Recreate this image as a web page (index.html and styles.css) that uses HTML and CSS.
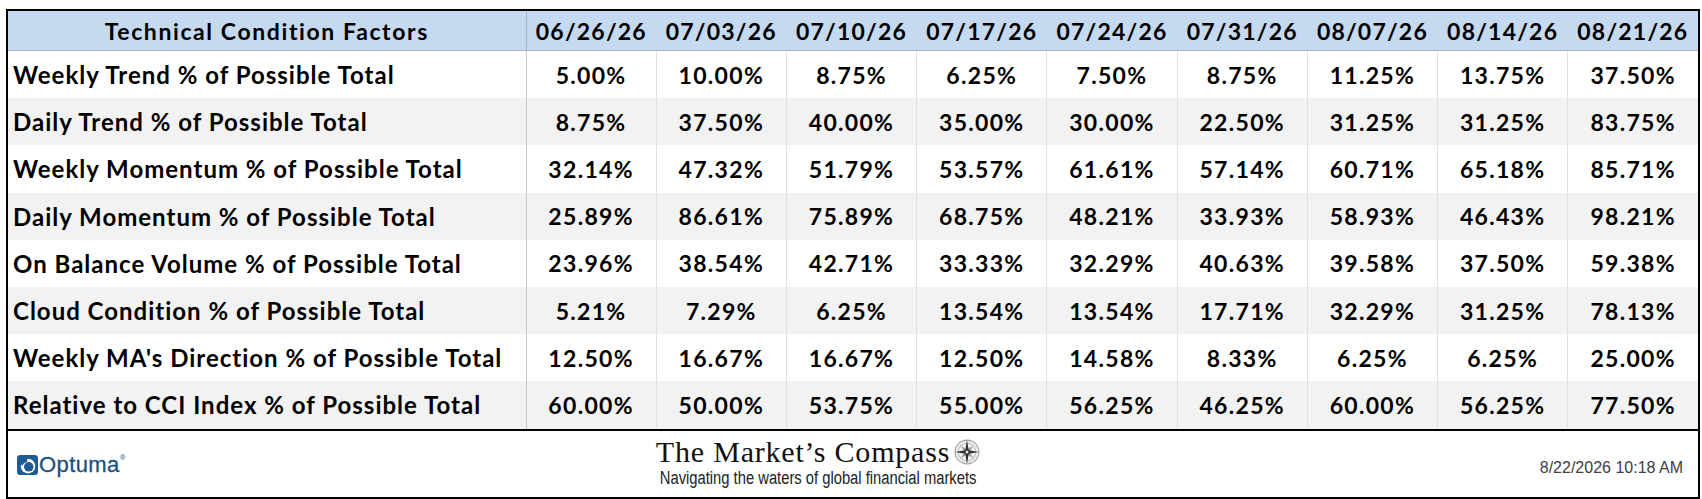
FILE: index.html
```html
<!DOCTYPE html>
<html lang="en">
<head>
<meta charset="utf-8">
<title>Technical Condition Factors</title>
<link rel="stylesheet" href="styles.css">
</head>
<body>
<div class="sheet">
  <table class="factors">
    <colgroup>
      <col class="col-label">
      <col span="9">
    </colgroup>
    <thead>
      <tr>
        <th class="label-head">Technical Condition Factors</th>
        <th>06/26/26</th><th>07/03/26</th><th>07/10/26</th><th>07/17/26</th><th>07/24/26</th><th>07/31/26</th><th>08/07/26</th><th>08/14/26</th><th>08/21/26</th>
      </tr>
    </thead>
    <tbody>
      <tr><td class="label">Weekly Trend % of Possible Total</td><td>5.00%</td><td>10.00%</td><td>8.75%</td><td>6.25%</td><td>7.50%</td><td>8.75%</td><td>11.25%</td><td>13.75%</td><td>37.50%</td></tr>
      <tr><td class="label">Daily Trend % of Possible Total</td><td>8.75%</td><td>37.50%</td><td>40.00%</td><td>35.00%</td><td>30.00%</td><td>22.50%</td><td>31.25%</td><td>31.25%</td><td>83.75%</td></tr>
      <tr><td class="label">Weekly Momentum % of Possible Total</td><td>32.14%</td><td>47.32%</td><td>51.79%</td><td>53.57%</td><td>61.61%</td><td>57.14%</td><td>60.71%</td><td>65.18%</td><td>85.71%</td></tr>
      <tr><td class="label">Daily Momentum % of Possible Total</td><td>25.89%</td><td>86.61%</td><td>75.89%</td><td>68.75%</td><td>48.21%</td><td>33.93%</td><td>58.93%</td><td>46.43%</td><td>98.21%</td></tr>
      <tr><td class="label">On Balance Volume % of Possible Total</td><td>23.96%</td><td>38.54%</td><td>42.71%</td><td>33.33%</td><td>32.29%</td><td>40.63%</td><td>39.58%</td><td>37.50%</td><td>59.38%</td></tr>
      <tr><td class="label">Cloud Condition % of Possible Total</td><td>5.21%</td><td>7.29%</td><td>6.25%</td><td>13.54%</td><td>13.54%</td><td>17.71%</td><td>32.29%</td><td>31.25%</td><td>78.13%</td></tr>
      <tr><td class="label">Weekly MA's Direction % of Possible Total</td><td>12.50%</td><td>16.67%</td><td>16.67%</td><td>12.50%</td><td>14.58%</td><td>8.33%</td><td>6.25%</td><td>6.25%</td><td>25.00%</td></tr>
      <tr><td class="label">Relative to CCI Index % of Possible Total</td><td>60.00%</td><td>50.00%</td><td>53.75%</td><td>55.00%</td><td>56.25%</td><td>46.25%</td><td>60.00%</td><td>56.25%</td><td>77.50%</td></tr>
    </tbody>
  </table>
  <div class="footer">
    <div class="optuma">
      <svg class="optuma-mark" width="21" height="20" viewBox="0 0 19 18" aria-hidden="true">
        <rect x="0" y="0" width="19" height="18" rx="3" fill="#1f5b95"/>
        <circle cx="10" cy="10" r="6.6" fill="#ffffff"/>
        <circle cx="10.6" cy="10.6" r="4.3" fill="#1f5b95"/>
        <path d="M2.5 8.5 Q4 3.2 9.5 3 L9 6.2 Q6 6.6 5 9.5 Z" fill="#1f5b95"/>
      </svg>
      <span class="optuma-name">Optuma</span><span class="optuma-reg">®</span>
    </div>
    <div class="brand">
      <div class="brand-title">The Market’s Compass
        <svg class="compass" width="26" height="26" viewBox="0 0 24 24" aria-hidden="true">
          <circle cx="12" cy="12" r="11" fill="#f0f0f0" stroke="#a0a0a0" stroke-width="1"/>
          <circle cx="12" cy="12" r="8.2" fill="none" stroke="#c4c4c4" stroke-width="1"/>
          <polygon points="12,3.5 13.3,10.7 20.5,12 13.3,13.3 12,20.5 10.7,13.3 3.5,12 10.7,10.7" fill="#3a3a3a" transform="rotate(45 12 12)" opacity="0.55"/>
          <polygon points="12,1 13.6,10.4 23,12 13.6,13.6 12,23 10.4,13.6 1,12 10.4,10.4" fill="#2e2e2e"/>
          <circle cx="12" cy="12" r="1.4" fill="#dcdcdc"/>
        </svg>
      </div>
      <div class="brand-sub">Navigating the waters of global financial markets</div>
    </div>
    <div class="stamp">8/22/2026 10:18 AM</div>
  </div>
</div>
</body>
</html>
```

FILE: styles.css
```css
html, body {
  margin: 0;
  padding: 0;
  background: #ffffff;
}

body {
  padding: 9px 0 0 6px;
}

.sheet {
  width: 1690px;
  border: 2px solid #000000;
  background: #ffffff;
}

.factors {
  width: 100%;
  border-collapse: collapse;
  table-layout: fixed;
  font-family: Lato, "Open Sans", sans-serif;
  font-weight: 700;
  color: #000000;
}

.col-label {
  width: 518px;
}

.factors th {
  height: 39px;
  padding: 0;
  background: #c5d9f1;
  font-size: 23px;
  letter-spacing: 1.2px;
  text-align: center;
  border-bottom: 1px solid #b4b4b4;
  font-weight: 700;
}

.factors th.label-head {
  border-right: 1px solid #a9b4c2;
  letter-spacing: 1.6px;
}

.factors td {
  height: 47.2px;
  padding: 0;
  font-size: 23px;
  letter-spacing: 1.3px;
  text-align: center;
  border-left: 1px solid #e0e0e0;
}

.factors td.label {
  text-align: left;
  padding-left: 5px;
  font-size: 24px;
  letter-spacing: 1px;
  border-left: none;
  border-right: 1px solid #c8c8c8;
}

.factors tbody tr:nth-child(even) td {
  background: #f2f2f2;
}

.footer {
  border-top: 2px solid #000000;
  height: 66px;
  display: grid;
  grid-template-columns: 1fr auto 1fr;
  align-items: center;
}

.optuma {
  display: flex;
  align-items: center;
  padding-left: 9px;
  padding-top: 2px;
  color: #1f4f82;
  font-family: "Liberation Sans", Arial, sans-serif;
}

.optuma-mark {
  display: block;
  margin-right: 1px;
}

.optuma-name {
  font-size: 22px;
  letter-spacing: 0.4px;
  -webkit-text-stroke: 0.3px #1f4f82;
}

.optuma-reg {
  font-size: 8px;
  align-self: flex-start;
  margin-top: 1px;
}

.brand {
  display: flex;
  flex-direction: column;
  align-items: center;
  margin-right: 70px;
  padding-bottom: 2px;
}

.brand-title {
  display: flex;
  align-items: center;
  gap: 4px;
  font-family: "Liberation Serif", "Times New Roman", serif;
  font-size: 30px;
  letter-spacing: 0.8px;
  line-height: 30px;
  color: #111111;
}

.compass {
  display: block;
}

.brand-sub {
  font-family: "Liberation Sans Narrow", "Arial Narrow", "Liberation Sans", sans-serif;
  font-size: 18px;
  line-height: 22px;
  color: #222222;
  white-space: nowrap;
  transform: scaleX(0.82);
}

.stamp {
  justify-self: end;
  padding-right: 15px;
  padding-top: 8px;
  font-family: "Liberation Sans", Arial, sans-serif;
  font-size: 16px;
  color: #404040;
}
```
